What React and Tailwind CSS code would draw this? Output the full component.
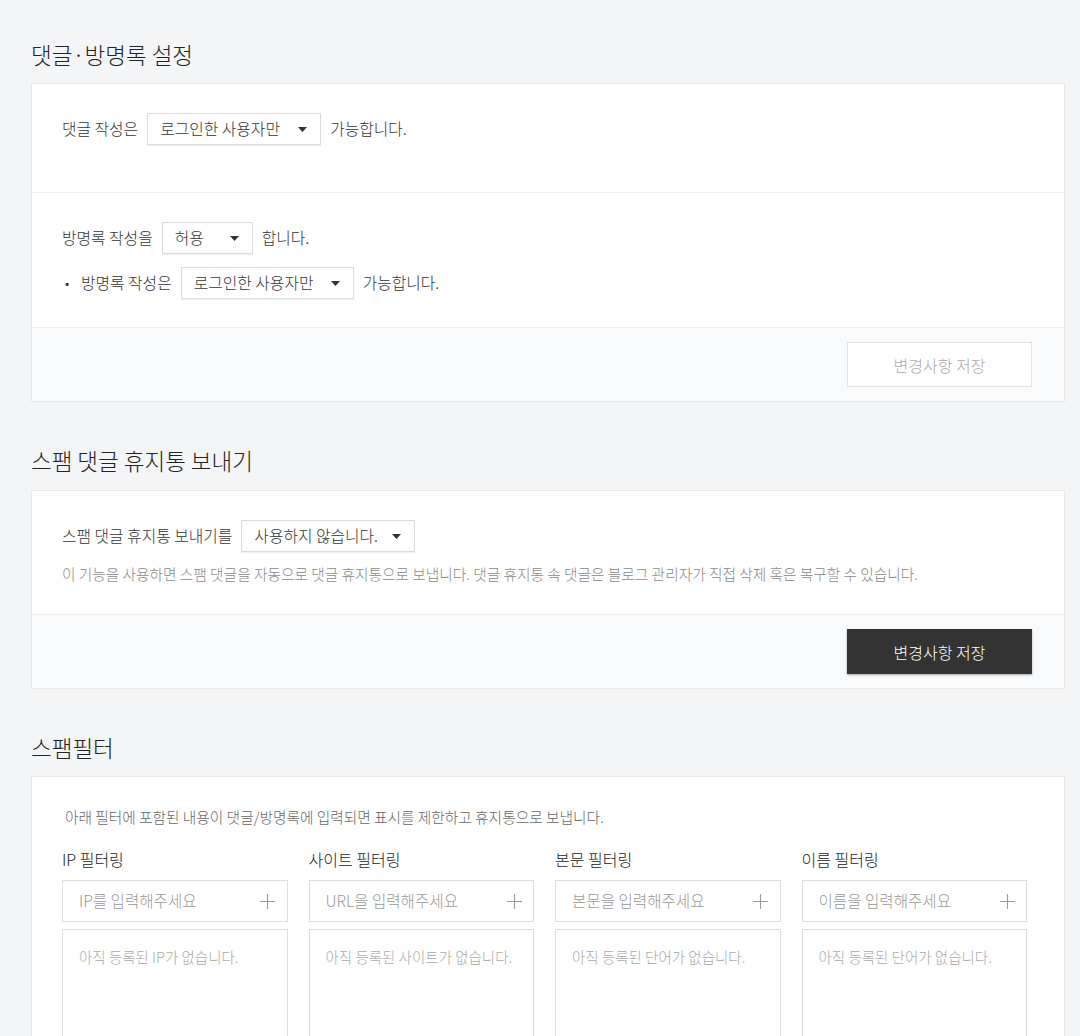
import React from 'react';

const FONT = { fontFamily: '"Noto Sans CJK KR", "Noto Sans", sans-serif' };

const Select = ({ value, width }) => (
    <div className={`${width} h-[32px] flex items-center justify-between pl-[12px] pr-[13px] bg-white border border-[#dcdcdc] shadow-[0_1px_1px_rgba(0,0,0,0.06)] text-[15.8px] text-[#333]`}>
        <span>{value}</span>
        <svg width="9" height="5" viewBox="0 0 9 5"><path d="M0 0h9L4.5 5z" fill="#333" /></svg>
    </div>
);

const Title = ({ children }) => (
    <h2 className="text-[22.5px] leading-[30px] text-[#222] font-light">{children}</h2>
);

const SaveButton = ({ active }) => (
    <div className="flex justify-end py-[14px] pr-[32px] bg-[#f9fafc] border-t border-[#efefef]">
        {active ? (
            <button className="w-[185px] h-[45px] bg-[#333] text-white text-[16px] font-light shadow-[0_1px_2px_rgba(0,0,0,0.35)]">변경사항 저장</button>
        ) : (
            <button className="w-[185px] h-[45px] bg-white border border-[#e3e3e3] text-[#aaa] text-[16px] font-light">변경사항 저장</button>
        )}
    </div>
);

const filters = [
    { label: 'IP 필터링', placeholder: 'IP를 입력해주세요', empty: '아직 등록된 IP가 없습니다.' },
    { label: '사이트 필터링', placeholder: 'URL을 입력해주세요', empty: '아직 등록된 사이트가 없습니다.' },
    { label: '본문 필터링', placeholder: '본문을 입력해주세요', empty: '아직 등록된 단어가 없습니다.' },
    { label: '이름 필터링', placeholder: '이름을 입력해주세요', empty: '아직 등록된 단어가 없습니다.' },
];

const App = () => {
    return (
        <div style={FONT} className="min-h-screen bg-[#f4f5f7] pl-[31px] pr-[15px] pt-[39px] pb-[40px] text-[#333] font-light">
            {/* 댓글·방명록 설정 */}
            <Title>댓글·방명록 설정</Title>
            <div className="w-[1034px] mt-[14px] bg-white border border-[#e9e9e9]">
                <div className="pl-[30px] pt-[29px] pb-[47px] flex items-center text-[15.8px]">
                    <span>댓글 작성은</span>
                    <div className="mx-[9px]"><Select value="로그인한 사용자만" width="w-[174px]" /></div>
                    <span>가능합니다.</span>
                </div>
                <div className="border-t border-[#f0f0f0] pl-[30px] pt-[29px] pb-[28px] text-[15.8px]">
                    <div className="flex items-center">
                        <span>방명록 작성을</span>
                        <div className="mx-[9px]"><Select value="허용" width="w-[91px]" /></div>
                        <span>합니다.</span>
                    </div>
                    <div className="flex items-center mt-[13px]">
                        <span className="w-[19px] pl-[3px] text-[13px]">•</span>
                        <span>방명록 작성은</span>
                        <div className="mx-[9px]"><Select value="로그인한 사용자만" width="w-[173px]" /></div>
                        <span>가능합니다.</span>
                    </div>
                </div>
                <SaveButton active={false} />
            </div>

            {/* 스팸 댓글 휴지통 보내기 */}
            <div className="mt-[43px]">
                <Title>스팸 댓글 휴지통 보내기</Title>
            </div>
            <div className="w-[1034px] bg-white border border-[#e9e9e9] mt-[15px]">
                <div className="pl-[30px] pt-[29px] pb-[29px] text-[15.8px]">
                    <div className="flex items-center">
                        <span>스팸 댓글 휴지통 보내기를</span>
                        <div className="ml-[9px]"><Select value="사용하지 않습니다." width="w-[174px]" /></div>
                    </div>
                    <p className="mt-[11px] text-[14.7px] leading-[22px] text-[#888]">이 기능을 사용하면 스팸 댓글을 자동으로 댓글 휴지통으로 보냅니다. 댓글 휴지통 속 댓글은 블로그 관리자가 직접 삭제 혹은 복구할 수 있습니다.</p>
                </div>
                <SaveButton active={true} />
            </div>

            {/* 스팸필터 */}
            <div className="mt-[43px]">
                <Title>스팸필터</Title>
            </div>
            <div className="w-[1034px] bg-white border border-[#e9e9e9] mt-[14px] pl-[30px] pr-[37px] pt-[29px] pb-[30px]">
                <p className="pl-[3px] text-[14.7px] leading-[22px] text-[#666]">아래 필터에 포함된 내용이 댓글/방명록에 입력되면 표시를 제한하고 휴지통으로 보냅니다.</p>
                <div className="grid grid-cols-4 gap-x-[21px] mt-[19px]">
                    {filters.map(f => (
                        <div key={f.label}>
                            <p className="text-[16px] leading-[24px] text-[#222]">{f.label}</p>
                            <div className="mt-[9px] h-[42px] flex items-center border border-[#dedede] bg-white">
                                <span className="flex-1 pl-[16px] text-[15.6px] text-[#999]">{f.placeholder}</span>
                                <span className="w-[38px] h-full flex items-center justify-center">
                                    <svg width="15" height="15" viewBox="0 0 15 15"><path d="M7.5 0v15M0 7.5h15" stroke="#999" strokeWidth="1.1" /></svg>
                                </span>
                            </div>
                            <div className="mt-[7px] h-[200px] border border-[#dedede] pl-[16px] pt-[16px] text-[14.5px] leading-[22px] text-[#aaa]">{f.empty}</div>
                        </div>
                    ))}
                </div>
            </div>
        </div>
    );
};

export default App;
